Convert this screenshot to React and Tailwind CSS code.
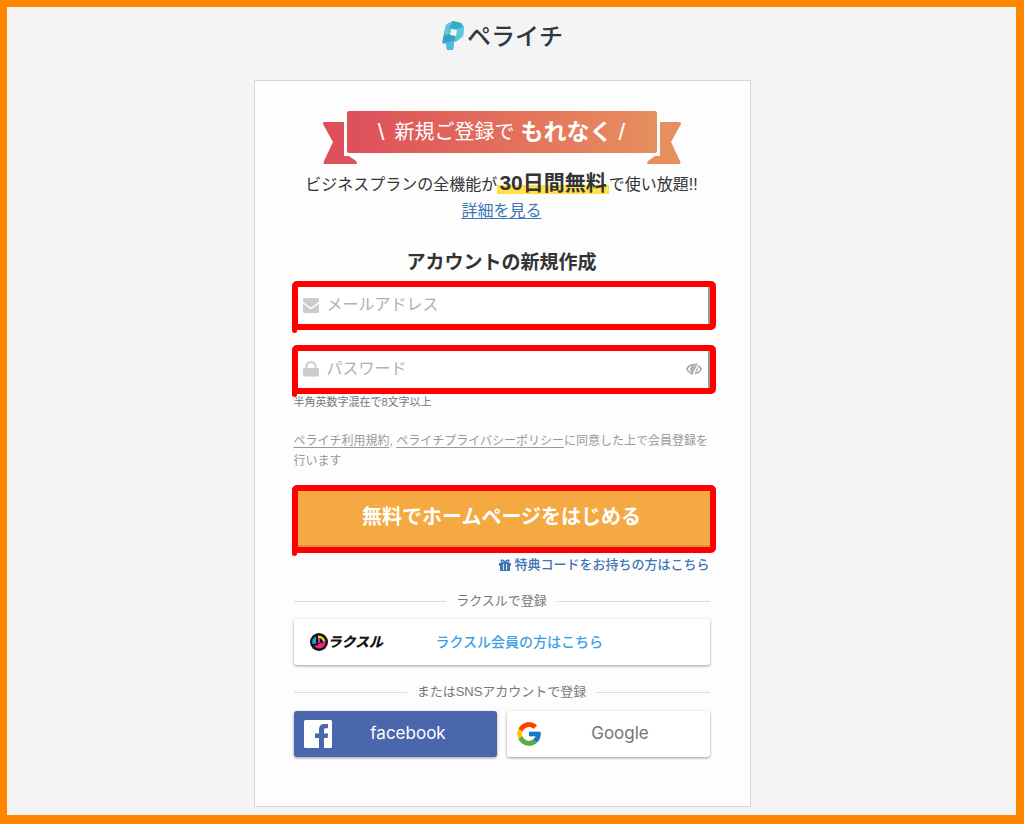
import { FcGoogle } from "react-icons/fc";

const LogoMark = () => (
  <svg viewBox="0 0 24 30" className="w-6 h-[30px]" aria-hidden="true">
    <path d="M5 4 12 0l8 2 3 4-1 9-6 5-3 1-1 8H6l-1-6-4-1 2-10z" fill="#4bbcd4" />
    <path d="M5 4 12 0l8 2 2 3-6 3-7-1-4 2z" fill="#3aa9c6" />
    <path d="M5 4 12 0 8 7v7l-5-2z" fill="#62c8da" />
    <path d="M2 16l6-3 8 2-4 5-10 2z" fill="#3a9fbe" />
    <path d="M16 8l7-2-1 9-6 5-2-4z" fill="#5ac8dc" />
    <path d="M5 22l8-1-1 8H6z" fill="#48c0d9" />
    <path d="M10 8l6 1-1 6-6-1z" fill="#f4f4f4" />
  </svg>
);

const MailIcon = () => (
  <svg viewBox="0 0 16 16" className="w-4 h-4" aria-hidden="true">
    <rect y="1" width="16" height="15" rx="1.5" fill="#ccc" />
    <path d="M0 5.5 8 11.5l8-6" fill="none" stroke="#fff" strokeWidth="1.5" />
  </svg>
);

const LockIcon = () => (
  <svg viewBox="0 0 16 16" className="w-4 h-4" aria-hidden="true">
    <rect y="7" width="16" height="8.5" rx="1.5" fill="#ccc" />
    <path d="M3.5 8V5.5a4.5 4.5 0 0 1 9 0V8" fill="none" stroke="#ccc" strokeWidth="2" />
  </svg>
);

const EyeOffIcon = () => (
  <svg viewBox="0 0 16 12" className="w-4 h-3" fill="none" stroke="#aaa" aria-hidden="true">
    <path d="M6.5 10.3C4 10 2 8.4.8 6 2.3 3.2 5 1.6 8 1.6q1 0 1.8.2M12 2.8q2 1.2 3.2 3.2c-1.4 2.7-3.7 4.2-6.5 4.4" strokeWidth="1.6" />
    <path d="M4.8 7.5C4 5 5.5 3 8 2.8L5.5 8.5z" fill="#aaa" />
    <path d="M11 .3 5.3 11.7" strokeWidth="1.6" />
    <path d="M11.3 4.5q.5 2.5-1.6 4" strokeWidth="1.2" />
  </svg>
);

const GiftIcon = () => (
  <svg viewBox="0 0 12 12" className="w-3 h-3" aria-hidden="true">
    <path d="M0 4h12v3H0zM1 7h10v5H1z" fill="#3e76b5" />
    <path d="M6 4C5 1 2.5.3 2.3 2.2 2.2 3.6 4 4 6 4c2 0 3.8-.4 3.7-1.8C9.5.3 7 1 6 4z" fill="none" stroke="#3e76b5" strokeWidth="1.5" />
    <path d="M4.5 5v6M7.5 5v6" stroke="#fdfdfd" strokeWidth=".8" />
  </svg>
);

const RaksulMark = () => (
  <svg viewBox="0 0 18 18" className="w-[18px] h-[18px]" aria-hidden="true">
    <circle cx="9" cy="9" r="9" fill="#151515" />
    <path d="M2.5 11A6.500 6.500 0 0 1 6 3.500v7z" fill="#19a8e0" />
    <path d="M8 2.500q6 0 7.500 6h-3l-1-3H8z" fill="#f4d521" />
    <path d="M4 12.500h4V5h2v4.500h2V8h3.500q0 7-6 7.500-3.500 0-5.500-3z" fill="#e72b8b" />
    <path d="M7 4v6.500h3M12 7v4" fill="none" stroke="#151515" strokeWidth="1.2" />
  </svg>
);

const FacebookMark = () => (
  <svg viewBox="0 0 28 28" className="w-7 h-7" aria-hidden="true">
    <rect width="28" height="28" rx="1.5" fill="#fff" />
    <path
      d="M15 28V18h-4v-4.500h4V10c0-4 2-6 5.500-6H24v4.300h-2.200c-1.500 0-1.800.7-1.800 2v3.200h4.200l-.6 4.500H20v10z"
      fill="#4a66ad"
    />
  </svg>
);

const Ribbon = () => (
  <svg
    viewBox="0 0 358 54"
    className="absolute inset-0 w-full h-full"
    preserveAspectRatio="none"
    aria-hidden="true"
  >
    <defs>
      <linearGradient id="ribbon" x1="0" x2="1">
        <stop offset="0" stopColor="#de4f5a" />
        <stop offset="1" stopColor="#e78f5e" />
      </linearGradient>
    </defs>
    <rect x="24" width="310" height="42" rx="2" fill="url(#ribbon)" />
    <path d="M1 11h20v34h5l7 5q2 3 0 3H1q-1-1 0-3l9-19L0 13q0-2 1-2z" fill="#de505b" />
    <path d="M357 11h-20v34h-5l-7 5q-2 3 0 3h32q1-1 0-3l-9-19 10-18q0-2-1-2z" fill="#e78f5e" />
  </svg>
);

// Red marker drawn round a control. The left stroke runs a little past the
// bottom edge, as if drawn by hand.
const Marker = ({ className, children }) => (
  <div className={`relative ${className}`}>
    {children}
    <span className="pointer-events-none absolute -top-[3px] -left-0.5 -right-[6px] -bottom-1 rounded-[5px] border-[6px] border-[#f00]" />
    <span className="pointer-events-none absolute top-0 -left-0.5 -bottom-[7px] w-[5px] rounded-full bg-[#f00]" />
  </div>
);

const Field = ({ id, type, placeholder, icon, children }) => (
  <div className="flex h-[42px] items-center border border-r-2 border-[#999] bg-white pr-1.5 pl-2">
    <label htmlFor={id} aria-label={placeholder}>
      {icon}
    </label>
    <input
      id={id}
      type={type}
      placeholder={placeholder}
      className="ml-2 min-w-0 flex-1 bg-transparent text-base text-[#333] outline-none placeholder:text-[#b0b0b0]"
    />
    {children}
  </div>
);

const Divider = ({ children, className }) => (
  <div className={`flex items-center gap-2.5 text-[13px] leading-5 text-[#777] ${className}`}>
    <span className="h-px flex-1 bg-[#ddd]" />
    {children}
    <span className="h-px flex-1 bg-[#ddd]" />
  </div>
);

const App = () => {
  return (
    <div className="flex min-h-screen flex-col items-center border-t-[7px] border-r-8 border-b-[9px] border-l-[7px] border-[#ff8700] bg-[#f4f4f4] pr-[35px] pb-2 pl-4 font-['Liberation_Sans','Noto_Sans_CJK_JP',sans-serif] text-[#333]">
      <header className="flex h-[73px] items-start pt-3">
        <a href="#" className="flex items-center gap-0.5">
          <LogoMark />
          <span className="pt-0.5 text-2xl leading-8 font-medium text-[#2f383e]">ペライチ</span>
        </a>
      </header>

      <main className="w-full max-w-[497px] border border-[#d6d6d6] bg-[#fdfdfd] pt-[30px] pr-10 pb-[49px] pl-[39px]">
        <div className="relative mx-auto flex h-[54px] max-w-[358px] items-start justify-center">
          <Ribbon />
          <p className="relative flex h-[42px] items-center gap-1.5 whitespace-nowrap text-white">
            <span className="mr-1 text-2xl">\</span>
            <span className="text-xl">新規ご登録で</span>
            <span className="text-[23px] font-bold">もれなく</span>
            <span className="text-2xl">/</span>
          </p>
        </div>

        <p className="mt-1.5 text-center text-base leading-6">
          ビジネスプランの全機能が
          <strong className="bg-linear-to-b from-transparent from-60% to-[#ffe04a] to-60% px-0.5 text-[21px]">
            30日間無料
          </strong>
          で使い放題!!
        </p>
        <p className="mt-0.5 text-center text-base leading-6">
          <a href="#" className="text-[#3e76b5] underline underline-offset-2">
            詳細を見る
          </a>
        </p>

        <h1 className="mt-[26px] text-center text-[19px] leading-7 font-bold">
          アカウントの新規作成
        </h1>

        <form onSubmit={(e) => e.preventDefault()}>
          <Marker className="mt-[7px]">
            <Field id="email" type="email" placeholder="メールアドレス" icon={<MailIcon />} />
          </Marker>
          <Marker className="mt-[22px]">
            <Field id="password" type="password" placeholder="パスワード" icon={<LockIcon />}>
              <button type="button" aria-label="パスワードを表示">
                <EyeOffIcon />
              </button>
            </Field>
          </Marker>
          <p className="mt-0.5 text-[11px] leading-5 text-[#777]">半角英数字混在で8文字以上</p>

          <p className="mt-[19px] text-xs leading-5 text-[#999]">
            <a href="#" className="underline underline-offset-2">ペライチ利用規約</a>,{" "}
            <a href="#" className="underline underline-offset-2">ペライチプライバシーポリシー</a>
            に同意した上で会員登録を<span className="inline-block">行います</span>
          </p>

          <Marker className="mt-[17px]">
            <button
              type="submit"
              className="block h-[61px] w-full rounded border-b-4 border-[#dc9638] bg-[#f4a942] text-xl font-bold text-white"
            >
              無料でホームページをはじめる
            </button>
          </Marker>
        </form>

        <p className="mt-1.5 text-[13px] leading-5 font-medium text-[#3e76b5]">
          <a href="#" className="flex items-center justify-end gap-[3px]">
            <GiftIcon />
            特典コードをお持ちの方はこちら
          </a>
        </p>

        <Divider className="mt-4">ラクスルで登録</Divider>
        <a
          href="#"
          className="mt-2 flex h-[46px] items-center rounded-[3px] bg-white px-4 text-sm font-medium text-[#3b9fe6] shadow-[0_1px_3px_rgba(0,0,0,0.4)]"
        >
          <RaksulMark />
          <span className="w-[108px] text-sm font-black text-[#151515] italic">ラクスル</span>
          ラクスル会員の方はこちら
        </a>

        <Divider className="mt-[17px]">またはSNSアカウントで登録</Divider>
        <div className="mt-[9px] grid grid-cols-2 gap-2.5 font-['Inter','Noto_Sans_CJK_JP',sans-serif] text-[17px]">
          <button
            type="button"
            className="flex h-[46px] items-center rounded-[3px] bg-[#4a66ad] pr-3 pl-2.5 text-white shadow-[0_1px_3px_rgba(0,0,0,0.4)]"
          >
            <FacebookMark />
            <span className="flex-1">facebook</span>
          </button>
          <button
            type="button"
            className="flex h-[46px] items-center rounded-[3px] bg-white pr-3 pl-2 text-[#757575] shadow-[0_1px_3px_rgba(0,0,0,0.4)]"
          >
            <FcGoogle className="h-7 w-7" />
            <span className="flex-1">Google</span>
          </button>
        </div>
      </main>
    </div>
  );
};

export default App;
